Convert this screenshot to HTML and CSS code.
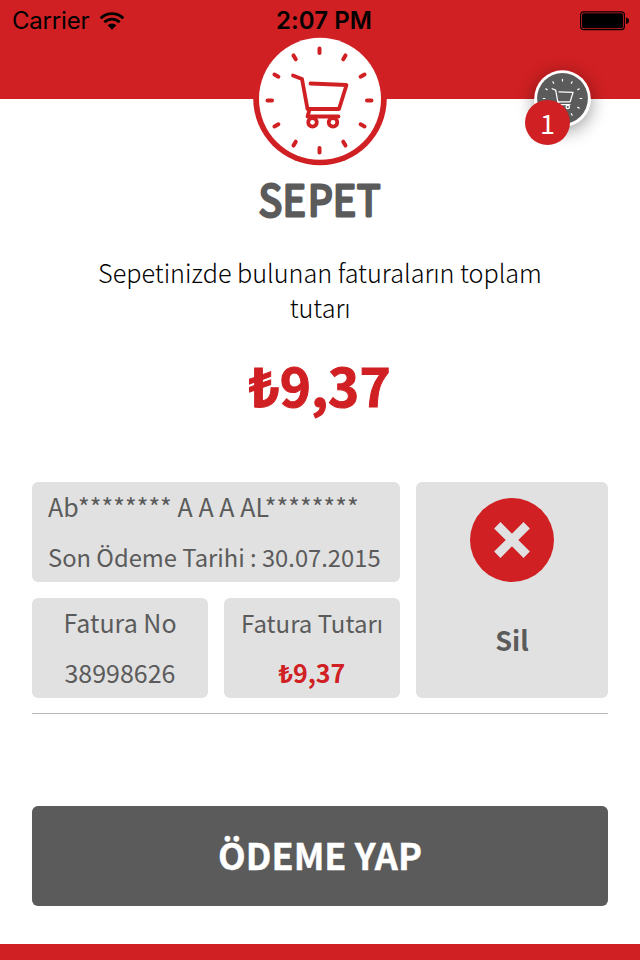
FILE: index.html
```html
<!DOCTYPE html>
<html lang="tr">
<head>
<meta charset="utf-8">
<title>Sepet</title>
<link rel="stylesheet" href="styles.css">
</head>
<body>
<svg class="defs" aria-hidden="true">
  <defs>
    <g id="cart" fill="none" stroke-linecap="round" stroke-linejoin="round">
      <path d="M-26.500-25-17.500-21.500-12 8.500H19.500L27-15.500-9-17"/>
      <path d="M-10 9-12 16H19"/>
      <circle cx="-7" cy="21.800" r="4.300"/>
      <circle cx="13.500" cy="21.800" r="4.300"/>
    </g>
    <g id="ticks" fill="none" stroke-linecap="round">
      <path id="pair" d="M0-52V-47.500M0 47.500V52"/>
      <use href="#pair" transform="rotate(30)"/>
      <use href="#pair" transform="rotate(60)"/>
      <use href="#pair" transform="rotate(90)"/>
      <use href="#pair" transform="rotate(120)"/>
      <use href="#pair" transform="rotate(150)"/>
    </g>
  </defs>
</svg>
<div class="screen">
  <header class="header">
    <div class="status">
      <div class="carrier"><span>Carrier</span>
        <svg class="wifi" width="26" height="20" viewBox="0 0 26 20">
          <g fill="none" stroke="#000" stroke-width="2.800">
            <path d="M1.700 7.200A16 16 0 0 1 24.300 7.200"/>
            <path d="M5.400 11.200A10.800 10.800 0 0 1 20.600 11.200"/>
          </g>
          <path d="M8.600 14.300A6.200 6.200 0 0 1 17.400 14.300L13 18.800Z"/>
        </svg>
      </div>
      <div class="time">2:07 PM</div>
      <svg class="battery" width="50" height="20" viewBox="0 0 50 20">
        <rect x=".6" y=".8" width="43.800" height="17.800" rx="3" fill="none" stroke="#000" stroke-width="1.200"/>
        <rect x="2" y="2.200" width="41" height="15" rx="1.800"/>
        <path d="M46 6.500Q49 7 49 9.700T46 13Z"/>
      </svg>
    </div>
    <svg class="emblem" width="140" height="140" viewBox="250 30 140 140">
      <circle cx="320" cy="98.500" r="66.800" fill="#d02023"/>
      <circle cx="320" cy="98.800" r="61" fill="#fff"/>
      <use href="#ticks" x="319.500" y="100.500" stroke="#d02023" stroke-width="4"/>
      <use href="#cart" x="319.500" y="100.500" stroke="#d02023" stroke-width="3.800"/>
    </svg>
    <div class="basket">
      <svg width="57" height="57" viewBox="-28.500 -28.500 57 57">
        <circle r="28.200" fill="#fff"/>
        <circle r="25.400" fill="#5b5b5b"/>
        <g stroke="#fff" stroke-width="3.200">
          <use href="#ticks" transform="scale(.37)"/>
          <use href="#cart" transform="scale(.39)"/>
        </g>
      </svg>
      <span class="count">1</span>
    </div>
  </header>
  <main class="content">
    <h1 class="title"><svg width="160" height="70" viewBox="0 0 160 70"><text class="title-text" transform="scale(.93 1)" x="20.100 46 73.100 100 125.800" y="50.300">SEPET</text></svg></h1>
    <p class="lead">Sepetinizde bulunan faturaların toplam tutarı</p>
    <p class="total">₺9,37</p>
    <section class="bill">
      <div class="card owner">
        <span class="name">Ab******** A A A AL********</span>
        <span class="due">Son Ödeme Tarihi : 30.07.2015</span>
      </div>
      <div class="card"><span class="nolabel">Fatura No</span><span class="number">38998626</span></div>
      <div class="card"><span class="amtlabel">Fatura Tutarı</span><span class="amount">₺9,37</span></div>
      <div class="card remove">
        <svg width="84" height="84" viewBox="-42 -42 84 84">
          <circle r="42" fill="#d02023"/>
          <path d="M-14.700-14.700 14.700 14.700M14.700-14.700-14.700 14.700" stroke="#e1e1e1" stroke-width="9"/>
        </svg>
        <span class="sil">Sil</span>
      </div>
    </section>
    <div class="pay"><span>ÖDEME YAP</span></div>
  </main>
  <footer class="footer"></footer>
</div>
</body>
</html>
```
FILE: styles.css
```css
* { box-sizing: border-box; margin: 0; padding: 0; }
body {
  background: #fff;
  color: #5b5b5b;
  font-family: "Noto Sans CJK SC", "Noto Sans", sans-serif;
}
svg { display: block; }
.defs { position: absolute; width: 0; height: 0; }
.screen {
  width: 640px;
  height: 960px;
  display: flex;
  flex-direction: column;
  overflow: hidden;
}
.header { position: relative; height: 99px; background: #d02023; }
.status {
  height: 42px;
  padding: 0 10px 0 12px;
  display: grid;
  grid-template-columns: 1fr auto 1fr;
  align-items: center;
  color: #000;
  font: 400 24px/42px Inter, sans-serif;
}
.carrier { display: flex; align-items: center; gap: 11px; letter-spacing: -.2px; }
.carrier .wifi { margin-left: -1px; }
.time { font-weight: 600; letter-spacing: .1px; padding-left: 6px; }
.battery { justify-self: end; }
.emblem { position: absolute; left: 250px; top: 30px; }
.basket {
  position: absolute;
  left: 534px;
  top: 70px;
  width: 57px;
  height: 57px;
  border-radius: 50%;
  box-shadow: 0 4px 18px rgba(0, 0, 0, .4);
}
.count {
  position: absolute;
  left: -9px;
  top: 30px;
  width: 45px;
  height: 45px;
  border-radius: 50%;
  background: #d02023;
  color: #fff;
  text-align: center;
  font-size: 27px;
  line-height: 45px;
  font-weight: 400;
}
.content { flex: 1; padding: 67px 32px 0; }
.title { display: flex; justify-content: center; height: 70px; }
.title-text {
  font-size: 42px;
  font-weight: 400;
  fill: #5b5b5b;
  stroke: #5b5b5b;
  stroke-width: 2.8px;
  stroke-linejoin: round;
}
.lead {
  margin-top: 19px;
  padding: 0 60px;
  color: #000;
  text-align: center;
  font-size: 25.2px;
  line-height: 35px;
  font-weight: 300;
}
.total {
  margin-top: 25px;
  height: 70px;
  color: #d02023;
  text-align: center;
  font-size: 53px;
  line-height: 69px;
  font-weight: 700;
  -webkit-text-stroke: 1px #d02023;
}
.bill {
  margin-top: 62px;
  height: 232px;
  border-bottom: 1px solid #b8b8b8;
  display: grid;
  grid-template: 100px 100px / 176px 176px 192px;
  gap: 16px;
}
.card {
  display: flex;
  flex-direction: column;
  align-items: center;
  border-radius: 6px;
  background: #e1e1e1;
  font-size: 25px;
  line-height: 50px;
  white-space: nowrap;
}
.owner { grid-column: 1 / 3; align-items: flex-start; padding-left: 16px; }
.name, .nolabel, .number, .amount { line-height: 48px; margin-bottom: 2px; }
.name { letter-spacing: .05px; }
.due { font-size: 23.75px; }
.amtlabel { font-size: 24px; }
.remove { grid-column: 3; grid-row: 1 / 3; padding-top: 16px; }
.amount { color: #d02023; font-weight: 700; }
.sil { margin-top: 33px; font-size: 27px; font-weight: 700; }
.pay {
  margin-top: 92px;
  height: 100px;
  border-radius: 6px;
  background: #5b5b5b;
  color: #fff;
  text-align: center;
  font-size: 36px;
  line-height: 97px;
  font-weight: 700;
  -webkit-text-stroke: .4px #fff;
}
.footer { height: 16px; background: #d02023; }
```
